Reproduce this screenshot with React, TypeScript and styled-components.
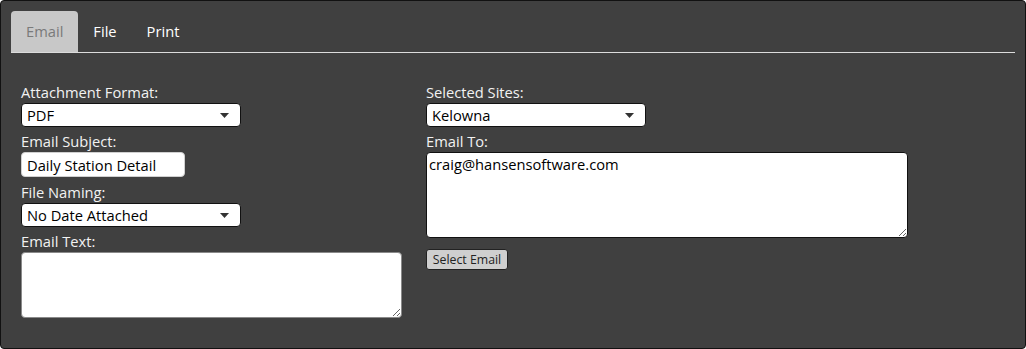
import React from "react";
import styled, { createGlobalStyle } from "styled-components";

const Global = createGlobalStyle`
  html, body { margin: 0; padding: 0; background: #ffffff; }
  body { font-family: "Century Gothic", "URW Gothic", "Open Sans", "DejaVu Sans", sans-serif; }
  * { box-sizing: border-box; }
`;

const Panel = styled.div`
  width: 1026px;
  height: 349px;
  background: #404040;
  border: 1px solid #111;
  border-radius: 4px;
  padding: 10px 10px 0 10px;
`;

const TabBar = styled.div`
  display: flex;
  height: 42px;
  border-bottom: 1px solid #dcdcdc;
`;

const Tab = styled.div<{ $active?: boolean }>`
  height: 41px;
  padding: 0 15px 1px;
  display: flex;
  align-items: center;
  font-size: 14.7px;
  border-radius: 4px 4px 0 0;
  background: ${(p) => (p.$active ? "#c8c8c8" : "transparent")};
  color: ${(p) => (p.$active ? "#7a7a7a" : "#ffffff")};
`;

const Columns = styled.div`
  display: grid;
  grid-template-columns: 405px 1fr;
  padding: 25px 10px 0 10px;
`;

const Column = styled.div`
  display: flex;
  flex-direction: column;
  align-items: flex-start;
`;

const Label = styled.label`
  display: block;
  color: #f2f2f2;
  font-size: 14.7px;
  line-height: 16px;
  margin: 6px 0 3px;
`;

const SelectWrap = styled.div<{ $w: number }>`
  position: relative;
  width: ${(p) => p.$w}px;
  height: 24px;
`;

const Select = styled.select`
  appearance: none;
  width: 100%;
  height: 100%;
  background: #fff;
  border: 1px solid #111;
  border-radius: 4px;
  padding: 0 20px 0 5px;
  font-family: inherit;
  font-size: 14.7px;
  color: #000;
  outline: none;
`;

const Caret = styled.svg`
  position: absolute;
  right: 12px;
  top: 10px;
  pointer-events: none;
`;

const TextInput = styled.input<{ $w: number }>`
  width: ${(p) => p.$w}px;
  height: 25px;
  margin-bottom: 1px;
  background: #fff;
  border: 1px solid #d0d0d0;
  border-radius: 4px;
  padding: 0 5px;
  font-family: inherit;
  font-size: 14.7px;
  color: #000;
  outline: none;
`;

const TextArea = styled.textarea<{ $w: number; $h: number; $dark?: boolean }>`
  width: ${(p) => p.$w}px;
  height: ${(p) => p.$h}px;
  background: #fff;
  border: 1px solid ${(p) => (p.$dark ? "#111" : "#8a8a8a")};
  border-radius: 4px;
  padding: 1px 2px;
  font-family: inherit;
  font-size: 14.7px;
  color: #000;
  outline: none;
  display: block;
`;

const Button = styled.button`
  margin-top: 11px;
  width: 82px;
  height: 21px;
  background: #cfcfcf;
  border: 1px solid #222;
  border-radius: 3px;
  font-family: inherit;
  font-size: 12.3px;
  color: #222;
  padding: 0;
`;

const Dropdown = ({ w, value }: { w: number; value: string }) => (
  <SelectWrap $w={w}>
    <Select defaultValue={value}>
      <option>{value}</option>
    </Select>
    <Caret width="9" height="5" viewBox="0 0 9 5">
      <path d="M0 0 H9 L4.5 5 Z" fill="#333" />
    </Caret>
  </SelectWrap>
);

export default function App() {
  return (
    <>
      <Global />
      <Panel>
        <TabBar>
          <Tab $active>Email</Tab>
          <Tab>File</Tab>
          <Tab>Print</Tab>
        </TabBar>
        <Columns>
          <Column>
            <Label>Attachment Format:</Label>
            <Dropdown w={220} value="PDF" />
            <Label>Email Subject:</Label>
            <TextInput $w={164} defaultValue="Daily Station Detail" />
            <Label>File Naming:</Label>
            <Dropdown w={220} value="No Date Attached" />
            <Label>Email Text:</Label>
            <TextArea $w={381} $h={66} />
          </Column>
          <Column>
            <Label>Selected Sites:</Label>
            <Dropdown w={220} value="Kelowna" />
            <Label>Email To:</Label>
            <TextArea $w={482} $h={86} $dark defaultValue="craig@hansensoftware.com" />
            <Button>Select Email</Button>
          </Column>
        </Columns>
      </Panel>
    </>
  );
}
